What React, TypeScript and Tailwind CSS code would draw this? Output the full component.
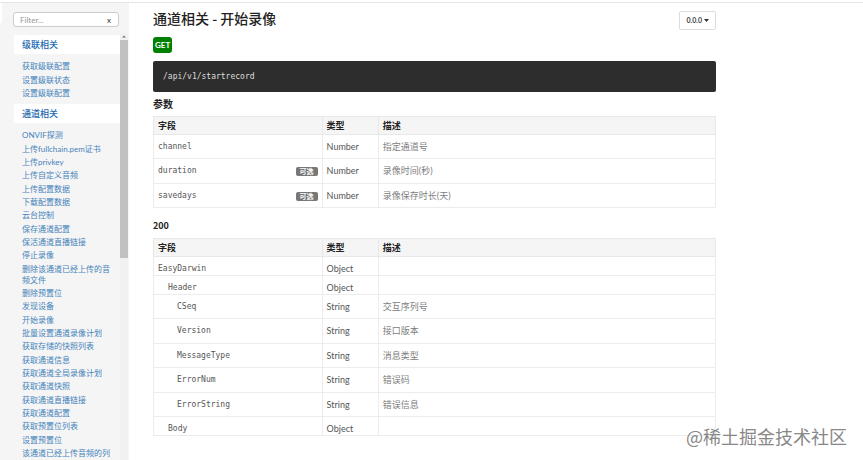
import React, { useState } from 'react';

interface NavGroup {
  title: string;
  items: string[];
}

interface Field {
  name: string;
  type: string;
  description?: string;
  optional?: boolean;
  level?: number;
}

const navGroups: NavGroup[] = [
  { title: '级联相关', items: ['获取级联配置', '设置级联状态', '设置级联配置'] },
  {
    title: '通道相关',
    items: [
      'ONVIF探测',
      '上传fullchain.pem证书',
      '上传privkey',
      '上传自定义音频',
      '上传配置数据',
      '下载配置数据',
      '云台控制',
      '保存通道配置',
      '保活通道直播链接',
      '停止录像',
      '删除该通道已经上传的音频文件',
      '删除预置位',
      '发现设备',
      '开始录像',
      '批量设置通道录像计划',
      '获取存储的快照列表',
      '获取通道信息',
      '获取通道全局录像计划',
      '获取通道快照',
      '获取通道直播链接',
      '获取通道配置',
      '获取预置位列表',
      '设置预置位',
      '该通道已经上传音频的列',
    ],
  },
];

const params: Field[] = [
  { name: 'channel', type: 'Number', description: '指定通道号' },
  { name: 'duration', type: 'Number', description: '录像时间(秒)', optional: true },
  { name: 'savedays', type: 'Number', description: '录像保存时长(天)', optional: true },
];

const response: Field[] = [
  { name: 'EasyDarwin', type: 'Object' },
  { name: 'Header', type: 'Object', level: 1 },
  { name: 'CSeq', type: 'String', description: '交互序列号', level: 2 },
  { name: 'Version', type: 'String', description: '接口版本', level: 2 },
  { name: 'MessageType', type: 'String', description: '消息类型', level: 2 },
  { name: 'ErrorNum', type: 'String', description: '错误码', level: 2 },
  { name: 'ErrorString', type: 'String', description: '错误信息', level: 2 },
  { name: 'Body', type: 'Object', level: 1 },
];

const indents = ['pl-1', 'pl-[14px]', 'pl-[23px]'];

const Sidebar: React.FC = () => {
  const [filter, setFilter] = useState('');

  return (
    <aside className="relative flex w-[129px] shrink-0 flex-col bg-[#f5f5f5]">
      <span className="absolute left-0 top-0 h-5 w-0.5 bg-white" />
      <div className="ml-[13px] mr-[10px] mt-[9px] flex h-[15px] shrink-0 items-center rounded-[3px] border border-[#ccc] bg-white">
        <input
          type="text"
          aria-label="Filter"
          placeholder="Filter..."
          value={filter}
          onChange={e => setFilter(e.target.value)}
          className="w-full min-w-0 flex-1 pl-1.5 text-[8px] leading-3 text-[#555] outline-none placeholder:text-[#999]"
        />
        <button onClick={() => setFilter('')} className="px-[7px] text-[8px] leading-3 text-[#333]">
          x
        </button>
      </div>
      <div className="mt-1.5 flex min-h-0 flex-1">
        <nav className="min-w-0 flex-1 overflow-hidden pl-[14px] pt-0.5">
          {navGroups.map(group => (
            <section key={group.title}>
              <h2 className="bg-white pl-2 text-[9px] font-medium leading-[19px] text-[#1a68b0]">
                <a href="#">{group.title}</a>
              </h2>
              <ul className="pb-[3px] pl-2 pr-1 pt-[7px]">
                {group.items
                  .filter(item => item.toLowerCase().includes(filter.toLowerCase()))
                  .map(item => (
                    <li key={item} className="pb-0.5 text-[8px] leading-[11px] text-[#4583bb] nth-[3n+1]:pb-[3px]">
                      <a href="#">{item}</a>
                    </li>
                  ))}
              </ul>
            </section>
          ))}
        </nav>
        <div className="flex w-[8px] shrink-0 flex-col items-center bg-[#f1f1f1]">
          <svg viewBox="0 0 8 7" className="h-[7px] w-2 shrink-0" fill="#777">
            <path d="M2 4.5 4 2.5 6 4.5z" />
          </svg>
          <div className="h-[51%] w-full bg-[#c1c1c1]" />
        </div>
        <div className="w-px" />
      </div>
    </aside>
  );
};

const FieldTable: React.FC<{ fields: Field[] }> = ({ fields }) => (
  <table className="w-full table-fixed border-collapse text-[9px] leading-3 text-[#555]">
    <thead>
      <tr className="h-[18px] bg-[#f5f5f5] text-left text-[#222]">
        <th className="w-[30%] border border-[#e8e8e8] px-1 py-0 font-bold">字段</th>
        <th className="w-[10%] border border-[#e8e8e8] px-1 py-0 font-bold">类型</th>
        <th className="w-[60%] border border-[#e8e8e8] px-1 py-0 font-bold">描述</th>
      </tr>
    </thead>
    <tbody>
      {fields.map(field => (
        <tr
          key={field.name}
          className={field.description ? 'h-6 align-top even:h-[25px]' : 'h-[19px] align-top'}
        >
          <td className={`border border-[#ececec] pb-0 pr-1 pt-1.5 ${indents[field.level ?? 0]}`}>
            <div className="flex items-center justify-between">
              <code className="font-['DejaVu_Sans_Mono','Liberation_Mono',monospace] text-[8px] leading-3">
                {field.name}
              </code>
              {field.optional && (
                <span className="rounded-xs bg-[#777] px-1 text-[7px] font-bold leading-[9px] text-white">可选</span>
              )}
            </div>
          </td>
          <td className="border border-[#ececec] px-1 pb-0 pt-1.5">{field.type}</td>
          <td className="border border-[#ececec] px-1 pb-0 pt-1.5 text-[#808080]">{field.description}</td>
        </tr>
      ))}
    </tbody>
  </table>
);

const App: React.FC = () => {
  return (
    <div className="flex h-screen flex-col overflow-hidden bg-white pt-0.5 font-['Lato','Noto_Sans_CJK_SC',sans-serif]">
      <div className="flex min-h-0 flex-1 border-t border-[#e5e5e5]">
        <Sidebar />
        <main className="min-w-0 flex-1 pl-6 pr-[147px] pt-2">
          <header className="flex items-start justify-between">
            <h1 className="font-['Noto_Sans_CJK_SC',sans-serif] text-[14px] font-medium leading-[14px] text-[#222]">
              通道相关 - 开始录像
            </h1>
            <button className="flex h-[19px] items-center gap-0.5 rounded-xs border border-[#ddd] px-1.5 text-[7px] font-bold text-[#444]">
              0.0.0
              <svg viewBox="0 0 5 3" className="h-[3px] w-[5px]" fill="#333">
                <path d="M0 0h5L2.5 3z" />
              </svg>
            </button>
          </header>
          <span className="mt-[7px] block w-fit rounded-[3px] bg-[#008000] px-0.5 text-[8px] font-bold leading-4 text-white">
            GET
          </span>
          <pre className="mt-2 rounded-xs bg-[#2d2d2d] px-2.5 py-2 font-['DejaVu_Sans_Mono','Liberation_Mono',monospace] text-[8px] leading-[15px] text-[#ddd]">
            /api/v1/startrecord
          </pre>
          <h2 className="mb-1 mt-1 text-[10px] font-bold leading-4 text-[#222]">参数</h2>
          <FieldTable fields={params} />
          <h2 className="mb-1 mt-2.5 font-['Noto_Sans_CJK_SC',sans-serif] text-[9px] font-bold leading-4 text-[#222]">
            200
          </h2>
          <FieldTable fields={response} />
        </main>
      </div>
      <div className="absolute bottom-3 right-4 font-['Noto_Sans_CJK_SC',sans-serif] text-[18px] leading-6 text-[#888]">
        @稀土掘金技术社区
      </div>
    </div>
  );
};

export default App;
